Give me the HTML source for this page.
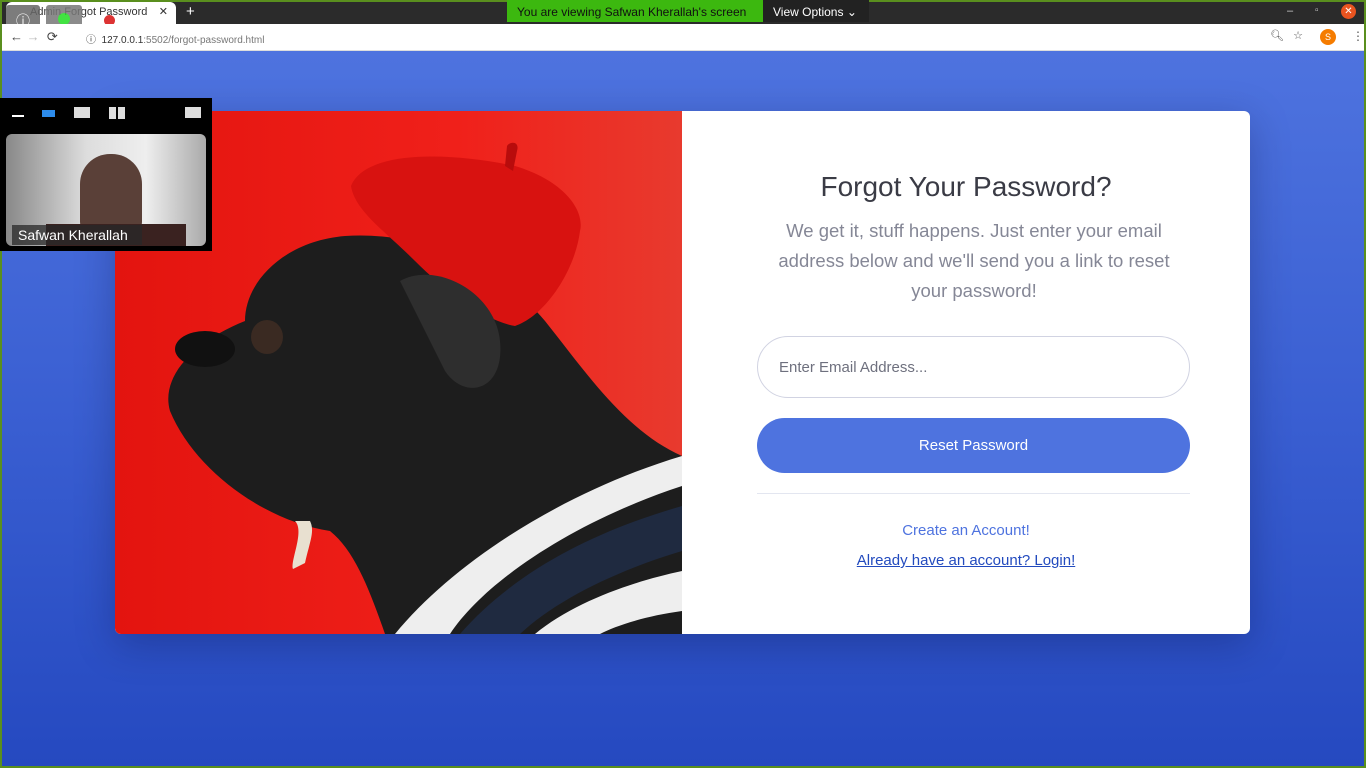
<!DOCTYPE html>
<html><head><meta charset="utf-8"><style>
*{margin:0;padding:0;box-sizing:border-box}
body{width:1366px;height:768px;overflow:hidden;background:#5a8f1e;font-family:"Liberation Sans",sans-serif;position:relative}
#tb{position:absolute;left:2px;top:2px;width:1362px;height:22px;background:#2b2b2b}
#tab{position:absolute;left:6px;top:2px;width:170px;height:22px;background:#fff;border-radius:6px 6px 0 0;font-size:11px;color:#333;padding:4px 0 0 24px}
#addr{position:absolute;left:2px;top:24px;width:1362px;height:27px;background:#fff;border-bottom:1px solid #ddd}
#page{position:absolute;left:2px;top:51px;width:1362px;height:715px;background:linear-gradient(180deg,#4e73df 0%,#3a5fd2 50%,#2549c0 100%)}
#card{position:absolute;left:115px;top:111px;width:1135px;height:523px;background:#fff;border-radius:6px;overflow:hidden;box-shadow:0 10px 40px rgba(0,0,40,.25)}
#img{position:absolute;left:0;top:0;width:567px;height:523px;background:linear-gradient(90deg,#e3140f,#f0201a 60%,#e83a2e)}
.f{font-family:"Liberation Sans",sans-serif;color:#5a5c69;text-align:center;position:absolute}
</style></head><body>
<div id="tb"></div>
<div id="tab">Admin Forgot Password <span style="position:absolute;right:8px;top:3px">✕</span></div>
<div style="position:absolute;left:186px;top:3px;color:#fff;font-size:15px">+</div>
<div style="position:absolute;left:6px;top:5px;width:34px;height:28px;background:#666;opacity:.85;border-radius:3px;color:#fff;text-align:center;font-size:14px;padding-top:6px">ⓘ</div>
<div style="position:absolute;left:46px;top:5px;width:36px;height:28px;background:#777;opacity:.85;border-radius:3px"><div style="width:12px;height:12px;background:#2d2;border-radius:50%;margin:8px auto"></div></div>
<div style="position:absolute;left:104px;top:15px;width:11px;height:11px;border-radius:50%;background:#d33"></div>
<div style="position:absolute;left:507px;top:0;width:256px;height:22px;background:#3cb80f;color:#111;font-size:12px;padding:5px 0 0 10px">You are viewing Safwan Kherallah's screen</div>
<div style="position:absolute;left:763px;top:0;width:106px;height:22px;background:#222;color:#fff;font-size:12px;padding:5px 0 0 10px">View Options ⌄</div>
<div style="position:absolute;left:1287px;top:5px;color:#ccc;font-size:11px">–</div>
<div style="position:absolute;left:1315px;top:5px;color:#ccc;font-size:10px">▫</div>
<div style="position:absolute;left:1341px;top:4px;width:15px;height:15px;border-radius:50%;background:#e95420;color:#fff;font-size:10px;text-align:center;line-height:15px">✕</div>
<div id="addr">
<div style="position:absolute;left:8px;top:5px;font-size:13px;color:#444">← <span style="color:#bbb">→</span> &nbsp;⟳</div>
<div style="position:absolute;left:84px;top:7px;font-size:10px;color:#333">ⓘ &nbsp;127.0.0.1<span style="color:#777">:5502/forgot-password.html</span></div>
<div style="position:absolute;left:1268px;top:5px;font-size:11px;color:#555">🔍︎ &nbsp; ☆</div>
<div style="position:absolute;left:1318px;top:5px;width:16px;height:16px;border-radius:50%;background:#f57c00;color:#fff;font-size:9px;text-align:center;line-height:16px">S</div>
<div style="position:absolute;left:1350px;top:5px;font-size:12px;color:#555">⋮</div>
</div>
<div id="page"></div>
<div id="card" style="position:absolute;left:115px;top:111px">
<div id="img">
<svg width="567" height="523" viewBox="0 0 567 523">
<path d="M130 210 C130 170 170 130 230 125 C300 120 380 150 430 210 C470 260 510 320 567 345 L567 523 L270 523 C255 480 240 440 215 420 C150 410 80 360 55 300 C45 265 80 230 130 210 Z" fill="#1d1d1d"/>
<path d="M236 75 C250 40 330 40 400 55 C450 70 470 100 465 120 C460 160 430 205 400 215 C370 210 330 180 300 150 C270 120 240 100 236 75 Z" fill="#d81210"/>
<path d="M390 55 L392 35 C395 30 405 30 402 40 L398 60 Z" fill="#b80c0c"/>
<path d="M285 170 C320 150 380 180 385 230 C390 280 350 290 330 260 Z" fill="#2e2e2e"/>
<ellipse cx="152" cy="226" rx="16" ry="17" fill="#3a2a22"/>
<ellipse cx="90" cy="238" rx="30" ry="18" fill="#111"/>
<path d="M280 523 C340 450 450 380 567 345 L567 375 C460 410 370 470 335 523 Z" fill="#eee"/>
<path d="M345 523 C400 460 480 420 567 395 L567 440 C500 460 440 490 405 523 Z" fill="#1f2a40"/>
<path d="M420 523 C460 490 520 470 567 460 L567 500 C530 505 500 515 485 523 Z" fill="#eee"/>
<path d="M180 410 C190 420 175 450 178 458 L190 452 C195 430 200 420 195 410 Z" fill="#e8e0d0"/>
</svg>
</div>
<div class="f" style="left:567px;width:568px;top:60px;font-size:28px;color:#3a3b45">Forgot Your Password?</div>
<div class="f" style="left:646px;width:426px;top:105px;font-size:18.5px;line-height:30px;color:#858796">We get it, stuff happens. Just enter your email address below and we'll send you a link to reset your password!</div>
<div style="position:absolute;left:642px;top:225px;width:433px;height:62px;border:1px solid #d1d3e2;border-radius:31px;font-size:15px;color:#6e707e;padding:22px 0 0 21px">Enter Email Address...</div>
<div style="position:absolute;left:642px;top:307px;width:433px;height:55px;background:#4e73df;border-radius:28px;color:#fff;font-size:15px;text-align:center;line-height:55px">Reset Password</div>
<div style="position:absolute;left:642px;top:382px;width:433px;border-top:1px solid #e3e6f0"></div>
<div class="f" style="left:567px;width:568px;top:411px;font-size:15px;color:#4e73df">Create an Account!</div>
<div class="f" style="left:567px;width:568px;top:441px;font-size:15px;color:#224abe;text-decoration:underline">Already have an account? Login!</div>
</div>
<div style="position:absolute;left:0;top:98px;width:212px;height:153px;background:#000">
<div style="position:absolute;left:12px;top:17px;width:12px;height:2px;background:#fff"></div>
<div style="position:absolute;left:42px;top:12px;width:13px;height:7px;background:#2d8ceb"></div>
<div style="position:absolute;left:74px;top:9px;width:16px;height:11px;background:#ddd"></div>
<div style="position:absolute;left:109px;top:9px;width:16px;height:12px;background:linear-gradient(90deg,#ddd 45%,#000 45%,#000 55%,#ddd 55%)"></div>
<div style="position:absolute;left:185px;top:9px;width:16px;height:11px;background:#ddd"></div>
<div style="position:absolute;left:6px;top:36px;width:200px;height:112px;border-radius:6px;overflow:hidden;background:linear-gradient(90deg,#888,#ddd 40%,#eee 70%,#aaa)">
<div style="position:absolute;left:74px;top:20px;width:62px;height:80px;border-radius:30px 30px 12px 12px;background:#5a4038"></div>
<div style="position:absolute;left:40px;top:90px;width:140px;height:24px;background:#3a2220"></div>
<div style="position:absolute;left:6px;top:91px;width:130px;height:20px;background:rgba(40,40,40,.75);color:#fff;font-size:14px;padding:2px 0 0 6px">Safwan Kherallah</div>
</div></div>
</body></html>
